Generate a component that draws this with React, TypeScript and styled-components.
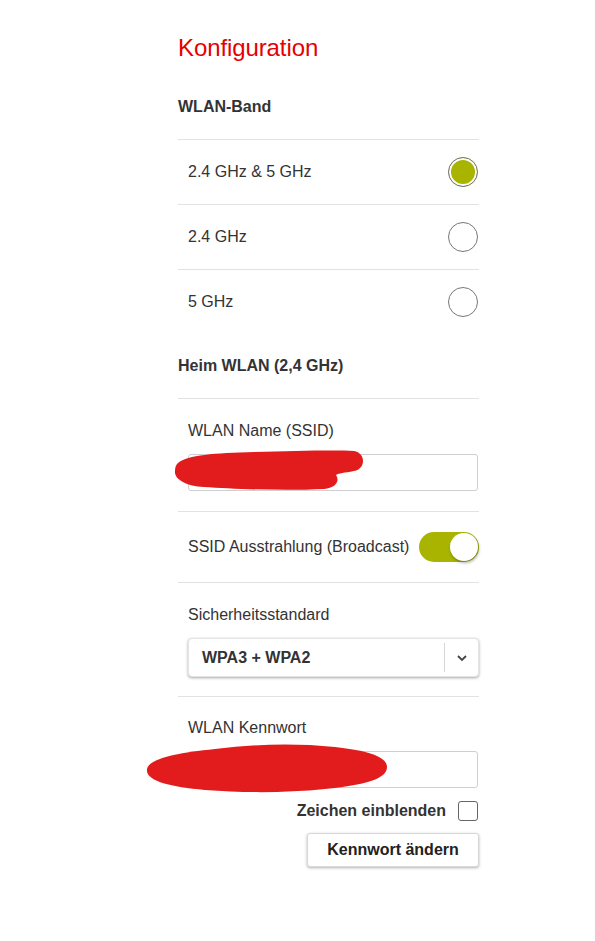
import React from "react";
import styled, { createGlobalStyle } from "styled-components";

const Global = createGlobalStyle`
  html, body { margin: 0; padding: 0; background: #fff; }
  body { font-family: "Liberation Sans", Arial, sans-serif; color: #333; }
`;

const Page = styled.div`
  width: 301px;
  margin-left: 178px;
  padding-top: 26px;
  padding-bottom: 60px;
`;

const Title = styled.h1`
  margin: 0;
  height: 49px;
  font-weight: normal;
  font-size: 24px;
  line-height: 44px;
  color: #e60000;
  letter-spacing: -0.1px;
`;

const SectionHead = styled.div`
  height: 65px;
  display: flex;
  align-items: center;
  font-weight: bold;
  font-size: 16px;
  color: #333;
  border-bottom: 1px solid #e2e2e2;
  box-sizing: border-box;
`;

const OptionRow = styled.label<{ $last?: boolean }>`
  height: ${(p) => (p.$last ? "64px" : "65px")};
  display: flex;
  align-items: center;
  justify-content: space-between;
  padding: 0 1px 0 10px;
  box-sizing: border-box;
  font-size: 16px;
  color: #333;
  border-bottom: ${(p) => (p.$last ? "none" : "1px solid #e2e2e2")};
`;

const Radio = styled.span<{ $checked?: boolean }>`
  width: 30px;
  height: 30px;
  border-radius: 50%;
  border: 1px solid #777;
  box-sizing: border-box;
  background: ${(p) => (p.$checked ? "#a8b400" : "#fff")};
  box-shadow: ${(p) => (p.$checked ? "inset 0 0 0 2px #fff" : "none")};
`;

const Block = styled.div<{ $bottom: number }>`
  padding: 20px 0 ${(p) => p.$bottom}px 10px;
  border-bottom: 1px solid #e2e2e2;
  display: flex;
  flex-direction: column;
`;

const Label = styled.div`
  font-size: 16px;
  line-height: 24px;
  color: #333;
  margin-bottom: 11px;
`;

const FieldWrap = styled.div`
  position: relative;
`;

const TextInput = styled.div`
  height: 37px;
  margin-right: 1px;
  border: 1px solid #cfcfcf;
  border-radius: 3px;
  box-sizing: border-box;
  background: #fff;
`;

const Redaction = styled.svg`
  position: absolute;
  pointer-events: none;
`;

const ToggleRow = styled.div`
  height: 71px;
  display: flex;
  align-items: center;
  justify-content: space-between;
  padding-left: 10px;
  font-size: 16px;
  color: #333;
  border-bottom: 1px solid #e2e2e2;
  box-sizing: border-box;
`;

const Toggle = styled.span`
  position: relative;
  width: 60px;
  height: 30px;
  border-radius: 15px;
  background: #a8b400;
  display: flex;
  align-items: center;
  justify-content: flex-end;
  padding: 1px;
  box-sizing: border-box;
`;

const Knob = styled.span`
  width: 28px;
  height: 28px;
  border-radius: 50%;
  background: #fff;
  box-shadow: 1px 2px 3px rgba(0, 0, 0, 0.3);
`;

const Select = styled.div`
  height: 39px;
  display: flex;
  align-items: center;
  border-radius: 4px;
  background: #fff;
  border: 1px solid #e4e4e4;
  box-shadow: 0 1px 3px rgba(0, 0, 0, 0.35);
  box-sizing: border-box;
`;

const SelectValue = styled.div`
  flex: 1;
  padding-left: 13px;
  font-weight: bold;
  font-size: 16px;
  color: #333;
`;

const SelectArrow = styled.div`
  width: 33px;
  height: 29px;
  border-left: 1px solid #d6d6d6;
  display: flex;
  align-items: center;
  justify-content: center;
`;

const PwBlock = styled.div`
  padding: 19px 0 0 10px;
  display: flex;
  flex-direction: column;
`;

const ShowRow = styled.label`
  margin-top: 13px;
  display: flex;
  justify-content: flex-end;
  align-items: center;
  gap: 12px;
  font-weight: bold;
  font-size: 16px;
  color: #333;
`;

const CheckBox = styled.span`
  width: 20px;
  height: 20px;
  border: 1px solid #666;
  border-radius: 3px;
  box-sizing: border-box;
  margin-right: 1px;
`;

const ButtonRow = styled.div`
  margin-top: 12px;
  display: flex;
  justify-content: flex-end;
`;

const Button = styled.button`
  width: 172px;
  height: 34px;
  background: #fff;
  border: 1px solid #d8d8d8;
  border-radius: 3px;
  box-shadow: 0 1px 3px rgba(0, 0, 0, 0.3);
  font-family: "Liberation Sans", Arial, sans-serif;
  font-weight: bold;
  font-size: 16px;
  color: #222;
  cursor: pointer;
`;

export default function App() {
  return (
    <>
      <Global />
      <Page>
        <Title>Konfiguration</Title>
        <SectionHead>WLAN-Band</SectionHead>
        <OptionRow>
          2.4 GHz &amp; 5 GHz
          <Radio $checked />
        </OptionRow>
        <OptionRow>
          2.4 GHz
          <Radio />
        </OptionRow>
        <OptionRow $last>
          5 GHz
          <Radio />
        </OptionRow>

        <SectionHead>Heim WLAN (2,4 GHz)</SectionHead>

        <Block $bottom={20}>
          <Label>WLAN Name (SSID)</Label>
          <FieldWrap>
            <TextInput />
            <Redaction
              width="192"
              height="42"
              viewBox="0 0 192 42"
              style={{ left: -14, top: -5 }}
            >
              <path
                d="M4 14 C 14 6, 40 4, 80 3 C 120 2, 160 1, 180 2 C 192 4, 192 20, 180 22 C 170 24, 165 24, 162 26 C 166 32, 162 39, 150 40 C 110 42, 60 40, 30 38 C 12 37, 0 30, 1 22 C 1 18, 2 16, 4 14 Z"
                fill="#e21c1c"
              />
            </Redaction>
          </FieldWrap>
        </Block>

        <ToggleRow>
          SSID Ausstrahlung (Broadcast)
          <Toggle>
            <Knob />
          </Toggle>
        </ToggleRow>

        <Block $bottom={19}>
          <Label>Sicherheitsstandard</Label>
          <Select>
            <SelectValue>WPA3 + WPA2</SelectValue>
            <SelectArrow>
              <svg width="12" height="8" viewBox="0 0 12 8">
                <path d="M2 2 L6 6 L10 2" fill="none" stroke="#444" strokeWidth="1.8" />
              </svg>
            </SelectArrow>
          </Select>
        </Block>

        <PwBlock>
          <Label>WLAN Kennwort</Label>
          <FieldWrap>
            <TextInput />
            <Redaction
              width="244"
              height="54"
              viewBox="0 0 244 54"
              style={{ left: -43, top: -10 }}
            >
              <path
                d="M2 28 C 4 18, 30 12, 70 8 C 110 3, 150 2, 190 6 C 225 10, 242 16, 242 26 C 242 38, 220 44, 180 48 C 140 52, 100 52, 60 49 C 25 46, 0 40, 2 28 Z"
                fill="#e21c1c"
              />
            </Redaction>
          </FieldWrap>
          <ShowRow>
            Zeichen einblenden
            <CheckBox />
          </ShowRow>
          <ButtonRow>
            <Button>Kennwort ändern</Button>
          </ButtonRow>
        </PwBlock>
      </Page>
    </>
  );
}
